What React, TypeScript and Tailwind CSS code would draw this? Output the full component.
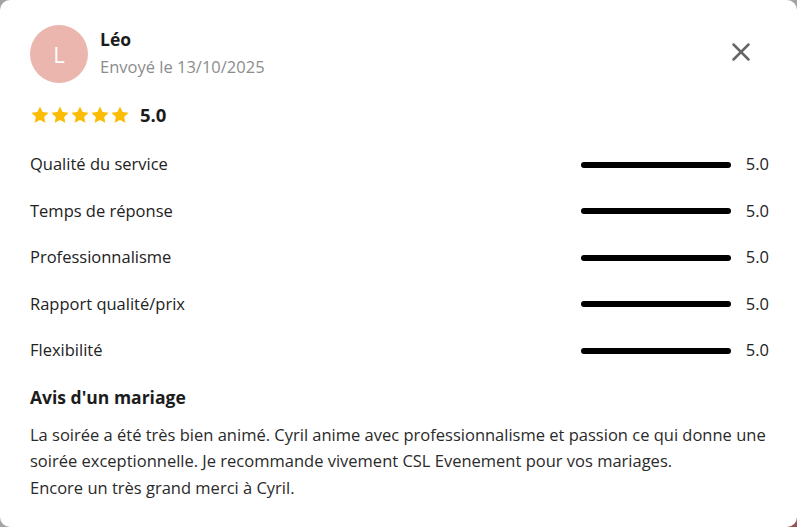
import { X } from 'lucide-react'

const criteria = [
  { label: 'Qualité du service', score: 5.0 },
  { label: 'Temps de réponse', score: 5.0 },
  { label: 'Professionnalisme', score: 5.0 },
  { label: 'Rapport qualité/prix', score: 5.0 },
  { label: 'Flexibilité', score: 5.0 },
]

function Star() {
  return (
    <svg viewBox="0 0 24 24" className="w-[20px] h-[20px]" fill="#fbbc05">
      <path d="M12 1.8l3.1 6.6 7.2.9-5.3 5 1.4 7.1L12 17.9l-6.4 3.5L7 14.3l-5.3-5 7.2-.9z" />
    </svg>
  )
}

export default function App() {
  return (
    <div
      className="w-[797px] h-[527px] bg-[linear-gradient(to_bottom_right,#a3a3a3_0%,#a3a3a3_96%,#9c4a4f_100%)] overflow-hidden"
      style={{ fontFamily: '"Open Sans", Lato, sans-serif' }}
    >
      <div className="w-full h-full bg-white rounded-[10px] pl-[30px] pr-[28px] pt-[25px] text-[#222]">
        {/* Header */}
        <div className="flex items-start justify-between">
          <div className="flex items-center gap-[12px]">
            <div className="w-[58px] h-[58px] rounded-full bg-[#ebb6ae] flex items-center justify-center text-white text-[22px]">
              L
            </div>
            <div className="flex flex-col">
              <span className="text-[17.5px] font-bold leading-[24px] text-[#1c1c1c] -mt-[3px]">Léo</span>
              <span className="text-[16.5px] leading-[22px] text-[#8c8c8c] mt-[5px]">Envoyé le 13/10/2025</span>
            </div>
          </div>
          <button className="mt-[12px] mr-[13px] text-[#666]">
            <X size={30} strokeWidth={2} />
          </button>
        </div>

        {/* Overall */}
        <div className="flex items-center gap-[10px] mt-[18px]">
          <div className="flex">
            <Star />
            <Star />
            <Star />
            <Star />
            <Star />
          </div>
          <span className="text-[18.5px] font-bold text-[#1c1c1c]">5.0</span>
        </div>

        {/* Criteria */}
        <div className="flex flex-col mt-[24px] gap-[22.5px]">
          {criteria.map((c) => (
            <div key={c.label} className="flex items-center justify-between h-[24px]">
              <span className="text-[16.5px] text-[#222]">{c.label}</span>
              <div className="flex items-center gap-[15px]">
                <div className="w-[150px] h-[6px] rounded-full bg-black" />
                <span className="text-[16.5px] text-[#222]">{c.score.toFixed(1)}</span>
              </div>
            </div>
          ))}
        </div>

        {/* Review */}
        <h3 className="text-[17.5px] leading-[24px] font-bold text-[#1c1c1c] mt-[22px]">Avis d'un mariage</h3>
        <p className="text-[16.5px] leading-[26.5px] text-[#2a2a2a] mt-[13px]">
          La soirée a été très bien animé. Cyril anime avec professionnalisme et passion ce qui donne une soirée
          exceptionnelle. Je recommande vivement CSL Evenement pour vos mariages.
          <br />
          Encore un très grand merci à Cyril.
        </p>
      </div>
    </div>
  )
}
